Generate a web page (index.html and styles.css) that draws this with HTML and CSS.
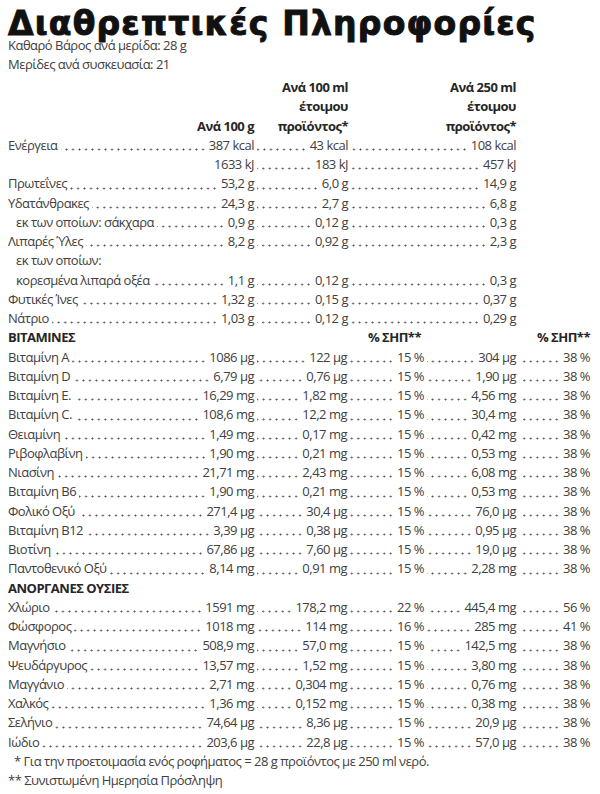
FILE: index.html
```html
<!DOCTYPE html>
<html lang="el">
<head>
<meta charset="utf-8">
<title>Διαθρεπτικές Πληροφορίες</title>
<link rel="stylesheet" href="styles.css">
</head>
<body>
<main class="label">
  <h1 class="title">Διαθρεπτικές Πληροφορίες</h1>
  <p class="meta">Καθαρό Βάρος ανά μερίδα: 28 g</p>
  <p class="meta">Μερίδες ανά συσκευασία: 21</p>

  <div class="row r3 head">
    <div class="hc">Ανά 100 g</div>
    <div class="hc">Ανά 100 ml<br>έτοιμου<br>προϊόντος*</div>
    <div class="hc">Ανά 250 ml<br>έτοιμου<br>προϊόντος*</div>
  </div>

  <div class="row r3"><div class="c"><span class="n">Ενέργεια</span><i class="l"></i><span class="v">387 kcal</span></div><div class="c"><i class="l"></i><span class="v">43 kcal</span></div><div class="c"><i class="l"></i><span class="v">108 kcal</span></div></div>
  <div class="row r3"><div class="c"><span class="v">1633 kJ</span></div><div class="c"><i class="l"></i><span class="v">183 kJ</span></div><div class="c"><i class="l"></i><span class="v">457 kJ</span></div></div>
  <div class="row r3"><div class="c"><span class="n">Πρωτεΐνες</span><i class="l"></i><span class="v">53,2 g</span></div><div class="c"><i class="l"></i><span class="v">6,0 g</span></div><div class="c"><i class="l"></i><span class="v">14,9 g</span></div></div>
  <div class="row r3"><div class="c"><span class="n">Υδατάνθρακες</span><i class="l"></i><span class="v">24,3 g</span></div><div class="c"><i class="l"></i><span class="v">2,7 g</span></div><div class="c"><i class="l"></i><span class="v">6,8 g</span></div></div>
  <div class="row r3"><div class="c"><span class="n ind">εκ των οποίων: σάκχαρα</span><i class="l"></i><span class="v">0,9 g</span></div><div class="c"><i class="l"></i><span class="v">0,12 g</span></div><div class="c"><i class="l"></i><span class="v">0,3 g</span></div></div>
  <div class="row r3"><div class="c"><span class="n">Λιπαρές Ύλες</span><i class="l"></i><span class="v">8,2 g</span></div><div class="c"><i class="l"></i><span class="v">0,92 g</span></div><div class="c"><i class="l"></i><span class="v">2,3 g</span></div></div>
  <div class="row"><span class="n ind">εκ των οποίων:</span></div>
  <div class="row r3"><div class="c"><span class="n ind">κορεσμένα λιπαρά οξέα</span><i class="l"></i><span class="v">1,1 g</span></div><div class="c"><i class="l"></i><span class="v">0,12 g</span></div><div class="c"><i class="l"></i><span class="v">0,3 g</span></div></div>
  <div class="row r3"><div class="c"><span class="n">Φυτικές Ίνες</span><i class="l"></i><span class="v">1,32 g</span></div><div class="c"><i class="l"></i><span class="v">0,15 g</span></div><div class="c"><i class="l"></i><span class="v">0,37 g</span></div></div>
  <div class="row r3"><div class="c"><span class="n">Νάτριο</span><i class="l"></i><span class="v">1,03 g</span></div><div class="c"><i class="l"></i><span class="v">0,12 g</span></div><div class="c"><i class="l"></i><span class="v">0,29 g</span></div></div>

  <div class="row r5 sect"><div class="c"><span class="n">ΒΙΤΑΜΙΝΕΣ</span></div><div class="c"></div><div class="c pc">% ΣΗΠ**</div><div class="c"></div><div class="c pc2">% ΣΗΠ**</div></div>
  <div class="row r5"><div class="c"><span class="n">Βιταμίνη A</span><i class="l"></i><span class="v">1086 μg</span></div><div class="c"><i class="l"></i><span class="v">122 μg</span></div><div class="c"><i class="l"></i><span class="v">15 %</span></div><div class="c"><i class="l"></i><span class="v">304 μg</span></div><div class="c"><i class="l"></i><span class="v">38 %</span></div></div>
  <div class="row r5"><div class="c"><span class="n">Βιταμίνη D</span><i class="l"></i><span class="v">6,79 μg</span></div><div class="c"><i class="l"></i><span class="v">0,76 μg</span></div><div class="c"><i class="l"></i><span class="v">15 %</span></div><div class="c"><i class="l"></i><span class="v">1,90 μg</span></div><div class="c"><i class="l"></i><span class="v">38 %</span></div></div>
  <div class="row r5"><div class="c"><span class="n">Βιταμίνη E.</span><i class="l"></i><span class="v">16,29 mg</span></div><div class="c"><i class="l"></i><span class="v">1,82 mg</span></div><div class="c"><i class="l"></i><span class="v">15 %</span></div><div class="c"><i class="l"></i><span class="v">4,56 mg</span></div><div class="c"><i class="l"></i><span class="v">38 %</span></div></div>
  <div class="row r5"><div class="c"><span class="n">Βιταμίνη C.</span><i class="l"></i><span class="v">108,6 mg</span></div><div class="c"><i class="l"></i><span class="v">12,2 mg</span></div><div class="c"><i class="l"></i><span class="v">15 %</span></div><div class="c"><i class="l"></i><span class="v">30,4 mg</span></div><div class="c"><i class="l"></i><span class="v">38 %</span></div></div>
  <div class="row r5"><div class="c"><span class="n">Θειαμίνη</span><i class="l"></i><span class="v">1,49 mg</span></div><div class="c"><i class="l"></i><span class="v">0,17 mg</span></div><div class="c"><i class="l"></i><span class="v">15 %</span></div><div class="c"><i class="l"></i><span class="v">0,42 mg</span></div><div class="c"><i class="l"></i><span class="v">38 %</span></div></div>
  <div class="row r5"><div class="c"><span class="n">Ριβοφλαβίνη</span><i class="l"></i><span class="v">1,90 mg</span></div><div class="c"><i class="l"></i><span class="v">0,21 mg</span></div><div class="c"><i class="l"></i><span class="v">15 %</span></div><div class="c"><i class="l"></i><span class="v">0,53 mg</span></div><div class="c"><i class="l"></i><span class="v">38 %</span></div></div>
  <div class="row r5"><div class="c"><span class="n">Νιασίνη</span><i class="l"></i><span class="v">21,71 mg</span></div><div class="c"><i class="l"></i><span class="v">2,43 mg</span></div><div class="c"><i class="l"></i><span class="v">15 %</span></div><div class="c"><i class="l"></i><span class="v">6,08 mg</span></div><div class="c"><i class="l"></i><span class="v">38 %</span></div></div>
  <div class="row r5"><div class="c"><span class="n">Βιταμίνη B6</span><i class="l"></i><span class="v">1,90 mg</span></div><div class="c"><i class="l"></i><span class="v">0,21 mg</span></div><div class="c"><i class="l"></i><span class="v">15 %</span></div><div class="c"><i class="l"></i><span class="v">0,53 mg</span></div><div class="c"><i class="l"></i><span class="v">38 %</span></div></div>
  <div class="row r5"><div class="c"><span class="n">Φολικό Οξύ</span><i class="l"></i><span class="v">271,4 μg</span></div><div class="c"><i class="l"></i><span class="v">30,4 μg</span></div><div class="c"><i class="l"></i><span class="v">15 %</span></div><div class="c"><i class="l"></i><span class="v">76,0 μg</span></div><div class="c"><i class="l"></i><span class="v">38 %</span></div></div>
  <div class="row r5"><div class="c"><span class="n">Βιταμίνη B12</span><i class="l"></i><span class="v">3,39 μg</span></div><div class="c"><i class="l"></i><span class="v">0,38 μg</span></div><div class="c"><i class="l"></i><span class="v">15 %</span></div><div class="c"><i class="l"></i><span class="v">0,95 μg</span></div><div class="c"><i class="l"></i><span class="v">38 %</span></div></div>
  <div class="row r5"><div class="c"><span class="n">Βιοτίνη</span><i class="l"></i><span class="v">67,86 μg</span></div><div class="c"><i class="l"></i><span class="v">7,60 μg</span></div><div class="c"><i class="l"></i><span class="v">15 %</span></div><div class="c"><i class="l"></i><span class="v">19,0 μg</span></div><div class="c"><i class="l"></i><span class="v">38 %</span></div></div>
  <div class="row r5"><div class="c"><span class="n">Παντοθενικό Οξύ</span><i class="l"></i><span class="v">8,14 mg</span></div><div class="c"><i class="l"></i><span class="v">0,91 mg</span></div><div class="c"><i class="l"></i><span class="v">15 %</span></div><div class="c"><i class="l"></i><span class="v">2,28 mg</span></div><div class="c"><i class="l"></i><span class="v">38 %</span></div></div>

  <div class="row sect"><span class="n">ΑΝΟΡΓΑΝΕΣ ΟΥΣΙΕΣ</span></div>
  <div class="row r5"><div class="c"><span class="n">Χλώριο</span><i class="l"></i><span class="v">1591 mg</span></div><div class="c"><i class="l"></i><span class="v">178,2 mg</span></div><div class="c"><i class="l"></i><span class="v">22 %</span></div><div class="c"><i class="l"></i><span class="v">445,4 mg</span></div><div class="c"><i class="l"></i><span class="v">56 %</span></div></div>
  <div class="row r5"><div class="c"><span class="n">Φώσφορος</span><i class="l"></i><span class="v">1018 mg</span></div><div class="c"><i class="l"></i><span class="v">114 mg</span></div><div class="c"><i class="l"></i><span class="v">16 %</span></div><div class="c"><i class="l"></i><span class="v">285 mg</span></div><div class="c"><i class="l"></i><span class="v">41 %</span></div></div>
  <div class="row r5"><div class="c"><span class="n">Μαγνήσιο</span><i class="l"></i><span class="v">508,9 mg</span></div><div class="c"><i class="l"></i><span class="v">57,0 mg</span></div><div class="c"><i class="l"></i><span class="v">15 %</span></div><div class="c"><i class="l"></i><span class="v">142,5 mg</span></div><div class="c"><i class="l"></i><span class="v">38 %</span></div></div>
  <div class="row r5"><div class="c"><span class="n">Ψευδάργυρος</span><i class="l"></i><span class="v">13,57 mg</span></div><div class="c"><i class="l"></i><span class="v">1,52 mg</span></div><div class="c"><i class="l"></i><span class="v">15 %</span></div><div class="c"><i class="l"></i><span class="v">3,80 mg</span></div><div class="c"><i class="l"></i><span class="v">38 %</span></div></div>
  <div class="row r5"><div class="c"><span class="n">Μαγγάνιο</span><i class="l"></i><span class="v">2,71 mg</span></div><div class="c"><i class="l"></i><span class="v">0,304 mg</span></div><div class="c"><i class="l"></i><span class="v">15 %</span></div><div class="c"><i class="l"></i><span class="v">0,76 mg</span></div><div class="c"><i class="l"></i><span class="v">38 %</span></div></div>
  <div class="row r5"><div class="c"><span class="n">Χαλκός</span><i class="l"></i><span class="v">1,36 mg</span></div><div class="c"><i class="l"></i><span class="v">0,152 mg</span></div><div class="c"><i class="l"></i><span class="v">15 %</span></div><div class="c"><i class="l"></i><span class="v">0,38 mg</span></div><div class="c"><i class="l"></i><span class="v">38 %</span></div></div>
  <div class="row r5"><div class="c"><span class="n">Σελήνιο</span><i class="l"></i><span class="v">74,64 μg</span></div><div class="c"><i class="l"></i><span class="v">8,36 μg</span></div><div class="c"><i class="l"></i><span class="v">15 %</span></div><div class="c"><i class="l"></i><span class="v">20,9 μg</span></div><div class="c"><i class="l"></i><span class="v">38 %</span></div></div>
  <div class="row r5"><div class="c"><span class="n">Ιώδιο</span><i class="l"></i><span class="v">203,6 μg</span></div><div class="c"><i class="l"></i><span class="v">22,8 μg</span></div><div class="c"><i class="l"></i><span class="v">15 %</span></div><div class="c"><i class="l"></i><span class="v">57,0 μg</span></div><div class="c"><i class="l"></i><span class="v">38 %</span></div></div>

  <p class="note n1">* Για την προετοιμασία ενός ροφήματος = 28 g προϊόντος με 250 ml νερό.</p>
  <p class="note">** Συνιστωμένη Ημερησία Πρόσληψη</p>
</main>
</body>
</html>
```
FILE: styles.css
```css
html, body {
  margin: 0;
  padding: 0;
  background: #ffffff;
}

.label {
  padding: 0 8px;
  font-family: "Open Sans", "DejaVu Sans", sans-serif;
  font-stretch: 89%;
  font-size: 13px;
  letter-spacing: -0.5px;
  line-height: 19.25px;
  color: #404040;
}

.title {
  margin: 10.5px 0 0;
  font-family: "DejaVu Sans", sans-serif;
  font-weight: 700;
  font-stretch: normal;
  font-size: 33px;
  line-height: 25px;
  letter-spacing: 1.2px;
  color: #111;
  -webkit-text-stroke: 1px #111;
  white-space: nowrap;
}

.meta {
  margin: 0;
}

.row {
  display: flex;
  height: 19.25px;
  white-space: nowrap;
}

.r3, .r5 {
  display: grid;
}

.r3 {
  grid-template-columns: 246px 94px 168px;
}

.r5 {
  grid-template-columns: 246px 93px 77px 92px 74px;
}

.head {
  height: auto;
  margin-top: 4px;
  align-items: end;
  font-weight: 700;
  color: #262626;
}

.hc {
  text-align: right;
}

.c {
  display: flex;
  align-items: flex-end;
  min-width: 0;
}

.n {
  flex: none;
}

.ind {
  padding-left: 8px;
}

.l {
  flex: 1;
  height: 3px;
  margin: 0 3px 4px 3px;
  background-image: radial-gradient(circle at center, #555 0.75px, rgba(85, 85, 85, 0) 1.25px);
  background-size: 6.5px 3px;
  background-repeat: repeat-x;
  background-position: right center;
}

.v {
  flex: none;
  margin-left: auto;
}

.sect {
  font-weight: 700;
  color: #262626;
}

.pc {
  justify-content: flex-end;
  padding-right: 3px;
}

.pc2 {
  justify-content: flex-end;
}

.note {
  margin: 0;
}

.n1 {
  padding-left: 6px;
}
```
